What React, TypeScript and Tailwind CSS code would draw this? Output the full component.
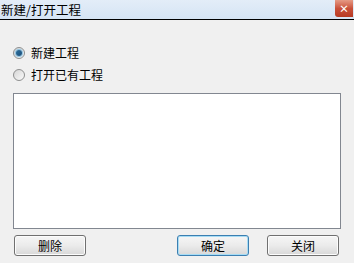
import React from "react";

const font = { fontFamily: '"Noto Sans CJK SC", "Liberation Sans", sans-serif' };

function Btn({ label, focused }: { label: string; focused?: boolean }) {
  return (
    <button
      className={
        "w-[72px] h-[21px] rounded-[3px] border text-[12px] leading-none text-black flex items-center justify-center bg-gradient-to-b from-[#f6f6f6] via-[#ebebeb] to-[#d8d8d8] " +
        (focused ? "border-[#3c7fb1] shadow-[inset_0_0_0_1px_#a6dcf5]" : "border-[#707070] shadow-[inset_0_0_0_1px_#fcfcfc]")
      }
      style={font}
    >
      {label}
    </button>
  );
}

function Radio({ checked }: { checked?: boolean }) {
  return (
    <span className="w-[12px] h-[12px] rounded-full border border-[#8e8f8f] bg-gradient-to-br from-[#d6d6d6] to-[#fafafa] flex items-center justify-center">
      {checked && (
        <span className="w-[6px] h-[6px] rounded-full bg-gradient-to-br from-[#2a6f9e] to-[#1b4f7a] shadow-[0_0_1px_1px_#87bfe0]" />
      )}
    </span>
  );
}

export default function App() {
  return (
    <div className="w-[354px] h-[263px] bg-[#f0f0f0] flex flex-col overflow-hidden" style={font}>
      <div className="h-[19px] bg-gradient-to-b from-[#e3edf8] to-[#d5e4f4] flex items-center justify-between">
        <span className="text-[12.5px] leading-none text-black pl-[1px] pt-[1px]">新建/打开工程</span>
        <span className="w-[18px] h-[17px] mr-[1px] self-start bg-gradient-to-b from-[#e59a85] via-[#c9503a] to-[#b73a22] rounded-bl-[3px] flex items-center justify-center text-white text-[10px] font-bold leading-none">
          ×
        </span>
      </div>
      <div className="h-[1px] bg-black" />
      <div className="flex-1 flex flex-col px-[13px]">
        <div className="flex flex-col gap-[9px] mt-[26px]">
          <label className="flex items-center gap-[6px] h-[13px]">
            <Radio checked />
            <span className="text-[12px] leading-none text-black">新建工程</span>
          </label>
          <label className="flex items-center gap-[6px] h-[13px]">
            <Radio />
            <span className="text-[12px] leading-none text-black">打开已有工程</span>
          </label>
        </div>
        <div className="mt-[12px] h-[136px] w-[328px] bg-white border border-[#828790]" />
        <div className="mt-[6px] flex items-center pl-[1px]">
          <Btn label="删除" />
          <div className="flex-1" />
          <Btn label="确定" focused />
          <div className="w-[18px]" />
          <Btn label="关闭" />
          <div className="w-[2px]" />
        </div>
      </div>
    </div>
  );
}
